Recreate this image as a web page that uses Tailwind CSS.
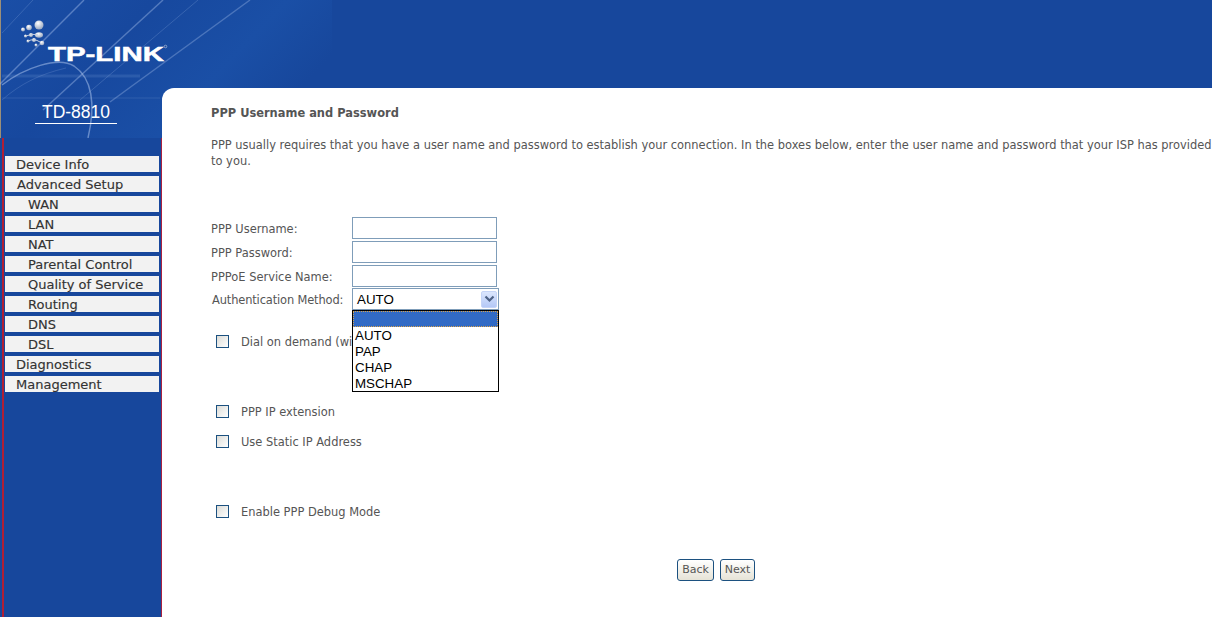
<!DOCTYPE html>
<html lang="en">
  <head>
    <meta charset="UTF-8" />
    <title>TD-8810</title>
    <script src="https://cdn.jsdelivr.net/npm/@tailwindcss/browser@4"></script>
  </head>
  <body class="bg-[#17479c] font-['DejaVu_Sans',sans-serif] text-[11.450px] text-[#555] overflow-hidden">
    <div class="relative flex h-[617px] w-[1212px] overflow-hidden">
      <!-- header artwork -->
      <svg class="absolute left-0 top-0" width="332" height="138" viewBox="0 0 332 138" xmlns="http://www.w3.org/2000/svg">
        <defs>
          <linearGradient id="bg" x1="0" y1="0" x2="1" y2="0.4">
            <stop offset="0" stop-color="#1a4ea6" />
            <stop offset="0.4" stop-color="#17489e" />
            <stop offset="0.75" stop-color="#1a4fa6" />
            <stop offset="1" stop-color="#17479c" />
          </linearGradient>
          <radialGradient id="ball" cx="0.4" cy="0.3" r="0.8">
            <stop offset="0" stop-color="#ffffff" />
            <stop offset="1" stop-color="#8b9cb8" />
          </radialGradient>
          <filter id="soft"><feGaussianBlur stdDeviation="0.5" /></filter>
        </defs>
        <rect width="332" height="138" fill="url(#bg)" />
        <rect x="0" y="0" width="1" height="138" fill="#9c8f78" />
        <g stroke="#a5bfea" fill="none" filter="url(#soft)">
          <path d="M84 0 L0 84" stroke-opacity="0.45" stroke-width="1.5" />
          <path d="M33 0 L2 33" stroke-opacity="0.22" />
          <path d="M163 0 L43 110" stroke-opacity="0.42" stroke-width="1.5" />
          <path d="M198 0 L80 100" stroke-opacity="0.22" />
          <path d="M250 0 L110 102" stroke-opacity="0.35" stroke-width="1.5" />
          <path d="M2 85 C24 68 58 56 74 66 C92 78 96 104 88 138" stroke-opacity="0.55" stroke-width="1.5" />
          <path d="M2 100 C20 84 40 74 66 68" stroke-opacity="0.2" />
          <path d="M2 76 L140 76" stroke-opacity="0.14" stroke-width="3" />
          <path d="M2 98 L160 98" stroke-opacity="0.08" stroke-width="2" />
        </g>
        <g fill="url(#ball)" filter="url(#soft)">
          <circle cx="39" cy="25" r="4.500" />
          <circle cx="29" cy="27.500" r="2.800" />
          <circle cx="23" cy="29.500" r="2" />
          <ellipse cx="39" cy="35" rx="4" ry="2.800" />
          <circle cx="31" cy="35" r="2" />
          <circle cx="25.500" cy="36" r="1.500" />
          <circle cx="34" cy="40" r="2" />
          <circle cx="42" cy="43" r="2.300" />
          <circle cx="28" cy="41" r="1.500" />
          <circle cx="36" cy="45" r="1.500" />
        </g>
        <path d="M26 36 Q32 33 38 35 M28 41 Q34 38 40 42" stroke="#c5cfdf" stroke-width="1" fill="none" />
        <text x="48" y="61" fill="#fff" stroke="#fff" stroke-width="0.5" font-family="Liberation Sans" font-weight="700" font-size="20" textLength="116" lengthAdjust="spacingAndGlyphs">TP-LINK</text>
        <circle cx="165.500" cy="46.500" r="1.300" fill="none" stroke="#c5cfdf" stroke-width="0.6" />
      </svg>

      <!-- left column -->
      <aside class="relative flex w-[162px] shrink-0 flex-col">
        <div class="h-[138px] pt-[102px] pl-[35px]">
          <div class="h-[22px] w-[82px] border-b border-white text-center font-['Liberation_Sans',sans-serif] text-[17.500px] leading-[20px] text-white">TD-8810</div>
        </div>
        <div class="ml-[2px] flex-1 border-l-[2px] border-r border-l-[#b01f35] border-r-[#a8213f]">
          <nav class="flex flex-col gap-[4px] pl-[1px] pr-[2px] pt-[18px] text-[13px] leading-[18px] text-[#333] [-webkit-text-stroke:0.15px_#333]">
            <a class="h-[16px] bg-[#f2f2f2] pl-[11px]">Device Info</a>
            <a class="h-[16px] bg-[#f2f2f2] pl-[12px]">Advanced Setup</a>
            <a class="h-[16px] bg-[#f2f2f2] pl-[23px]">WAN</a>
            <a class="h-[16px] bg-[#f2f2f2] pl-[23px]">LAN</a>
            <a class="h-[16px] bg-[#f2f2f2] pl-[23px]">NAT</a>
            <a class="h-[16px] bg-[#f2f2f2] pl-[23px]">Parental Control</a>
            <a class="h-[16px] bg-[#f2f2f2] pl-[23px]">Quality of Service</a>
            <a class="h-[16px] bg-[#f2f2f2] pl-[23px]">Routing</a>
            <a class="h-[16px] bg-[#f2f2f2] pl-[23px]">DNS</a>
            <a class="h-[16px] bg-[#f2f2f2] pl-[23px]">DSL</a>
            <a class="h-[16px] bg-[#f2f2f2] pl-[11px]">Diagnostics</a>
            <a class="h-[16px] bg-[#f2f2f2] pl-[11px]">Management</a>
          </nav>
        </div>
      </aside>

      <!-- content -->
      <main class="relative mt-[88px] flex-1 rounded-tl-[12px] bg-white pl-[49px] pt-[17px] leading-[16px]">
        <h2 class="font-bold leading-[16px]">PPP Username and Password</h2>
        <p class="mt-[16px] w-[1001px]">PPP usually requires that you have a user name and password to establish your connection. In the boxes below, enter the user name and password that your ISP has provided to you.</p>

        <div class="mt-[48px] flex flex-col gap-[2px]">
          <label class="flex h-[22px] items-center"><span class="w-[141px] pt-[2px]">PPP Username:</span><input class="h-[22px] w-[145px] border border-[#7f9db9]" /></label>
          <label class="flex h-[22px] items-center"><span class="w-[141px] pt-[2px]">PPP Password:</span><input class="h-[22px] w-[145px] border border-[#7f9db9]" /></label>
          <label class="flex h-[22px] items-center"><span class="w-[141px] pt-[2px]">PPPoE Service Name:</span><input class="h-[22px] w-[145px] border border-[#7f9db9]" /></label>
          <div class="relative -mt-[1px] flex h-[22px] items-center">
            <span class="w-[141px] pl-[1px] pt-[2px] tracking-[-0.14px]">Authentication Method:</span>
            <div class="flex h-[22px] w-[147px] items-center justify-between border border-[#7f9db9] pl-[4px] pr-[1px] font-['Liberation_Sans',sans-serif] text-[13.330px] text-black">
              <span class="pt-[2px]">AUTO</span>
              <span class="flex h-[17px] w-[16px] items-center justify-center rounded-[2px] border border-[#c5d4f7] bg-gradient-to-b from-[#dbe6fd] to-[#b4c8f6]">
                <svg width="11" height="8" viewBox="0 0 11 8" xmlns="http://www.w3.org/2000/svg"><path d="M1.500 1.500 L5.500 5.500 L9.500 1.500" fill="none" stroke="#4d6185" stroke-width="2.200" /></svg>
              </span>
            </div>
            <!-- open dropdown list -->
            <ul class="absolute left-[141px] top-[22px] z-10 h-[82px] w-[147px] border border-black bg-white font-['Liberation_Sans',sans-serif] text-[13.330px] leading-[18px] text-black">
              <li class="h-[16px] border border-dotted border-[#d9a24a] bg-[#316ac5]"></li>
              <li class="h-[16px] pl-[2px]">AUTO</li>
              <li class="h-[16px] pl-[2px]">PAP</li>
              <li class="h-[16px] pl-[2px]">CHAP</li>
              <li class="h-[16px] pl-[2px]">MSCHAP</li>
            </ul>
          </div>
        </div>

        <div class="mt-[24px] flex h-[16px] items-center">
          <span class="mb-[1px] ml-[5px] mr-[12px] h-[13px] w-[13px] border border-[#1c5180] bg-gradient-to-br from-[#dcdcd7] to-white"></span><span class="w-[111px] overflow-hidden whitespace-nowrap">Dial on demand (wi</span>
        </div>
        <div class="mt-[54px] flex h-[16px] items-center">
          <span class="mb-[1px] ml-[5px] mr-[12px] h-[13px] w-[13px] border border-[#1c5180] bg-gradient-to-br from-[#dcdcd7] to-white"></span>PPP IP extension
        </div>
        <div class="mt-[14px] flex h-[16px] items-center">
          <span class="mb-[1px] ml-[5px] mr-[12px] h-[13px] w-[13px] border border-[#1c5180] bg-gradient-to-br from-[#dcdcd7] to-white"></span>Use Static IP Address
        </div>
        <div class="mt-[54px] flex h-[16px] items-center">
          <span class="mb-[1px] ml-[5px] mr-[12px] h-[13px] w-[13px] border border-[#1c5180] bg-gradient-to-br from-[#dcdcd7] to-white"></span>Enable PPP Debug Mode
        </div>

        <div class="ml-[466px] mt-[39px] flex gap-[6px]">
          <button class="h-[22px] w-[37px] rounded-[3px] border border-[#1c5180] bg-gradient-to-b from-white to-[#e6e3d6] text-[11px] text-[#555]">Back</button>
          <button class="h-[22px] w-[35px] rounded-[3px] border border-[#1c5180] bg-gradient-to-b from-white to-[#e6e3d6] text-[11px] text-[#555]">Next</button>
        </div>
      </main>
    </div>
  </body>
</html>
